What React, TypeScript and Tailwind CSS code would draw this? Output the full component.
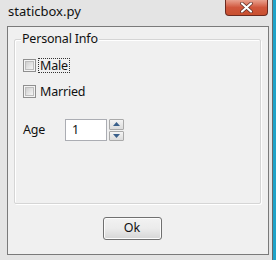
const font = { fontFamily: '"Noto Sans", "Open Sans", sans-serif' };

function CheckBox({ label, focused }: { label: string; focused?: boolean }) {
  return (
    <div className="flex items-center h-[14px]">
      <div className="w-[13px] h-[13px] border border-[#8f8f8f] bg-[#f4f4f4] p-[1px]">
        <div className="w-full h-full bg-gradient-to-br from-[#cfcfcf] to-[#f6f6f6] border border-[#bdbdbd]" />
      </div>
      <span
        className={
          "ml-[3px] px-[1px] leading-[13px] text-[12.5px] tracking-[-0.2px] text-[#111] " +
          (focused ? "outline outline-1 outline-dotted outline-[#333]" : "")
        }
      >
        {label}
      </span>
    </div>
  );
}

function SpinButton({ up }: { up?: boolean }) {
  return (
    <div className="flex-1 flex items-center justify-center bg-gradient-to-b from-[#f4f4f4] to-[#dcdcdc] border border-[#a9a9a9] rounded-[1px]">
      <svg width="7" height="4" viewBox="0 0 7 4">
        {up ? (
          <polygon points="0,4 7,4 3.5,0" fill="#3a5f8a" />
        ) : (
          <polygon points="0,0 7,0 3.5,4" fill="#3a5f8a" />
        )}
      </svg>
    </div>
  );
}

export default function App() {
  return (
    <div className="relative w-[276px] h-[260px] bg-[#e4e4e4] overflow-hidden" style={font}>
      {/* right edge of something behind */}
      <div className="absolute right-[3px] top-0 bottom-0 w-[1px] bg-[#6a6a6a]" />
      <div className="absolute right-0 top-0 bottom-0 w-[3px] bg-[#1fa3c8]" />

      <div className="flex flex-col h-full pl-[3px] pr-[3px] pb-[5px]">
        {/* title bar */}
        <div className="relative h-[26px] flex items-center pl-[5px] shrink-0">
          <span className="text-[13px] text-[#111] mt-[-2px]">staticbox.py</span>
          <div className="absolute top-0 right-[5px] w-[43px] h-[16px] rounded-b-[4px] border border-[#6b2a20] border-t-0 bg-gradient-to-b from-[#e8a08e] via-[#d0563c] to-[#c8502f] flex items-center justify-center">
            <svg width="13" height="11" viewBox="0 0 13 11">
              <path d="M2 1.5 L11 9.5 M11 1.5 L2 9.5" stroke="#5a2a22" strokeWidth="3.6" strokeLinecap="round" />
              <path d="M2 1.5 L11 9.5 M11 1.5 L2 9.5" stroke="#ffffff" strokeWidth="2.2" strokeLinecap="round" />
            </svg>
          </div>
        </div>

        {/* client area */}
        <div className="flex-1 border border-[#7a7a7a] ml-[4px] mr-[4px] bg-[#f0f0f0] flex flex-col">
          <div className="relative mt-[12px] ml-[6px] mr-[7px] h-[165px] border border-[#d5d5d5] rounded-[2px] shadow-[inset_1px_1px_0_#fff,1px_1px_0_#fff]">
            <span className="absolute left-[6px] top-[-9px] px-[1px] bg-[#f0f0f0] text-[12.5px] tracking-[-0.2px] leading-[16px] text-[#111]">
              Personal Info
            </span>
            <div className="flex flex-col gap-[12px] pl-[8px] pt-[18px]">
              <CheckBox label="Male" focused />
              <CheckBox label="Married" />
            </div>
            <div className="flex items-center pl-[8px] mt-[21px]">
              <span className="text-[12.5px] tracking-[-0.2px] text-[#111] w-[42px]">Age</span>
              <div className="w-[42px] h-[22px] bg-white border border-[#abadb3] flex items-center pl-[6px] text-[12.5px] text-[#111]">
                1
              </div>
              <div className="ml-[2px] w-[15px] h-[22px] flex flex-col gap-[1px]">
                <SpinButton up />
                <SpinButton />
              </div>
            </div>
          </div>
          <div className="flex justify-center mt-[13px] mr-[12px]">
            <button className="w-[59px] h-[23px] rounded-[3px] border border-[#707070] bg-gradient-to-b from-[#f2f2f2] via-[#ebebeb] to-[#d6d6d6] text-[12.5px] text-[#111] shadow-[inset_0_0_0_1px_#fcfcfc]">
              Ok
            </button>
          </div>
        </div>
      </div>
    </div>
  );
}
